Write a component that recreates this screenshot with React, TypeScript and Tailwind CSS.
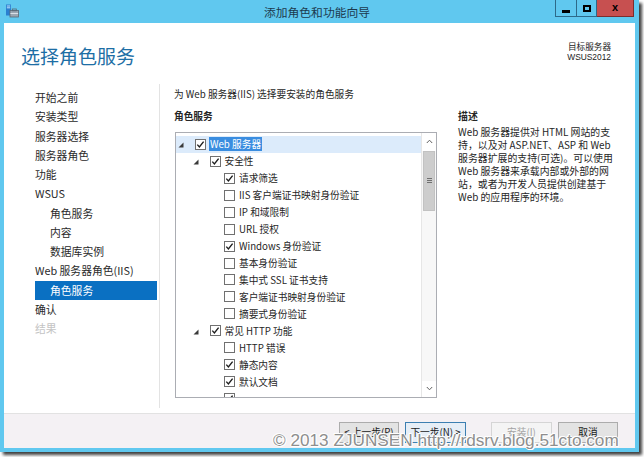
import React from "react";

type Row = { l: number; e?: boolean; c?: boolean; t: string; sel?: boolean };

const rows: Row[] = [
  { l: 0, e: true, c: true, t: "Web 服务器", sel: true },
  { l: 1, e: true, c: true, t: "安全性" },
  { l: 2, c: true, t: "请求筛选" },
  { l: 2, t: "IIS 客户端证书映射身份验证" },
  { l: 2, t: "IP 和域限制" },
  { l: 2, t: "URL 授权" },
  { l: 2, c: true, t: "Windows 身份验证" },
  { l: 2, t: "基本身份验证" },
  { l: 2, t: "集中式 SSL 证书支持" },
  { l: 2, t: "客户端证书映射身份验证" },
  { l: 2, t: "摘要式身份验证" },
  { l: 1, e: true, c: true, t: "常见 HTTP 功能" },
  { l: 2, t: "HTTP 错误" },
  { l: 2, c: true, t: "静态内容" },
  { l: 2, c: true, t: "默认文档" },
  { l: 2, c: true, t: "" },
];

const indent = ["pl-0", "pl-[14.5px]", "pl-[29px]"];

function Check({ checked }: { checked?: boolean }) {
  return (
    <span className="w-[11px] h-[11px] border border-[#707070] bg-white flex items-center justify-center shrink-0">
      {checked && (
        <svg width="9" height="9" viewBox="0 0 9 9">
          <path d="M1.3 4.6 L3.4 6.9 L7.6 1.6" stroke="#1e1e1e" strokeWidth="1.4" fill="none" />
        </svg>
      )}
    </span>
  );
}

function Arrow() {
  return (
    <svg width="6" height="6" viewBox="0 0 6 6" className="mt-[2px]">
      <polygon points="5.5,0.5 5.5,5.5 0.5,5.5" fill="#3a3a3a" />
    </svg>
  );
}

const nav: { t: string; sub?: boolean; sel?: boolean; dis?: boolean }[] = [
  { t: "开始之前" },
  { t: "安装类型" },
  { t: "服务器选择" },
  { t: "服务器角色" },
  { t: "功能" },
  { t: "WSUS" },
  { t: "角色服务", sub: true },
  { t: "内容", sub: true },
  { t: "数据库实例", sub: true },
  { t: "Web 服务器角色(IIS)" },
  { t: "角色服务", sub: true, sel: true },
  { t: "确认" },
  { t: "结果", dis: true },
];

const desc = [
  "Web 服务器提供对 HTML 网站的支",
  "持，以及对 ASP.NET、ASP 和 Web",
  "服务器扩展的支持(可选)。可以使用",
  "Web 服务器来承载内部或外部的网",
  "站，或者为开发人员提供创建基于",
  "Web 的应用程序的环境。",
];

export default function App() {
  return (
    <div className="w-[644px] h-[457px] bg-white relative overflow-hidden font-['Noto_Sans_CJK_SC',sans-serif]">
      <div className="w-[639px] h-[452px] bg-[#60c8ef] flex flex-col shadow-[3px_3px_3px_rgba(0,0,0,0.75)]">
        {/* title bar */}
        <div className="h-[23px] flex items-start relative">
          <div className="pl-[5px] pt-[4px] w-[100px]">
            <svg width="14" height="14" viewBox="0 0 14 14">
              <rect x="1" y="0.5" width="5" height="11" fill="#2a7fd0" />
              <rect x="1.8" y="1.5" width="3.4" height="1" fill="#bfe3ff" />
              <rect x="1.8" y="3.3" width="3.4" height="1" fill="#bfe3ff" />
              <rect x="5" y="6.5" width="8.5" height="6.5" fill="#9aa7b3" stroke="#5b6772" strokeWidth="0.8" />
              <rect x="7.3" y="5" width="4" height="1.8" fill="none" stroke="#5b6772" strokeWidth="0.8" />
              <rect x="5.4" y="9" width="7.7" height="0.8" fill="#e8eef3" />
            </svg>
          </div>
          <div className="flex-1 text-center text-[11.8px] leading-[16px] pt-[4px] text-[#1c3a4e]">添加角色和功能向导</div>
          <div className="flex h-[17px] mr-[5px] w-[100px] justify-end">
            <div className="w-[22px] h-[17px] border border-[#2d6a89] border-t-0 flex items-end justify-center pb-[3px]">
              <div className="w-[8px] h-[3px] bg-black" />
            </div>
            <div className="w-[20px] h-[17px] border border-[#2d6a89] border-t-0 border-l-0 flex items-center justify-center">
              <div className="w-[8px] h-[7px] border-2 border-black" />
            </div>
            <div className="w-[37px] h-[17px] bg-[#c75050] border border-[#7c2d2d] border-t-0 border-l-0 flex items-center justify-center text-[11px] font-bold leading-none text-black font-['Liberation_Sans',sans-serif] pb-[1px]">
              x
            </div>
          </div>
        </div>

        {/* client area */}
        <div className="mx-[4px] flex-1 flex flex-col">
          <div className="h-[390px] bg-white flex flex-col">
            {/* header */}
            <div className="h-[61px] flex justify-between pl-[17px] pr-[24px]">
              <div className="pt-[20px] text-[19px] leading-[26px] text-[#1d6ea5]">选择角色服务</div>
              <div className="pt-[18px] text-[8.6px] leading-[10.5px] text-right text-[#222]">
                <div>目标服务器</div>
                <div className="font-['Liberation_Sans',sans-serif] text-[8.4px]">WSUS2012</div>
              </div>
            </div>
            {/* body */}
            <div className="flex-1 flex pb-[5px]">
              <div className="w-[156px] border-r border-[#e3e3e3] pt-[4px] pl-[31px] pr-[2px] text-[10.8px] text-[#2a2a2a]">
                {nav.map((n, i) => (
                  <div
                    key={i}
                    className={
                      "h-[19.25px] leading-[19.25px] whitespace-nowrap " +
                      (n.sub ? "pl-[15px] " : "") +
                      (n.sel ? "bg-[#0a70c2] text-white " : "") +
                      (n.dis ? "text-[#c4c4c4]" : "")
                    }
                  >
                    {n.t}
                  </div>
                ))}
              </div>
              <div className="flex-1 pl-[14px] pt-[2px] text-[9.7px] text-[#262626]">
                <div className="leading-[16px]">为 Web 服务器(IIS) 选择要安装的角色服务</div>
                <div className="flex mt-[6px]">
                  <div className="flex flex-col">
                    <div className="leading-[16px] font-bold">角色服务</div>
                    <div className="ml-[1px] mt-[7.5px] w-[262px] h-[266px] border border-[#abadb3] flex overflow-hidden">
                      <div className="flex-1 pt-[3.5px] overflow-hidden">
                        {rows.map((r, i) => (
                          <div
                            key={i}
                            className={
                              "h-[16.95px] flex items-center whitespace-nowrap " +
                              indent[r.l] +
                              (r.sel ? " bg-[#dcebfb]" : "")
                            }
                          >
                            <div className="w-[19px] pl-[2px] flex items-center shrink-0">{r.e && <Arrow />}</div>
                            <Check checked={r.c} />
                            {r.t && (
                              <span
                                className={
                                  "ml-[3px] px-[1px] leading-[14px] " +
                                  (r.sel ? "bg-[#3a8de0] text-white" : "")
                                }
                              >
                                {r.t}
                              </span>
                            )}
                          </div>
                        ))}
                      </div>
                      <div className="w-[15px] border-l border-[#e6e6e6] flex flex-col bg-[#f7f7f7]">
                        <div className="h-[18px] bg-white flex items-center justify-center">
                          <svg width="7" height="5" viewBox="0 0 7 5">
                            <path d="M0.8 4 L3.5 1.2 L6.2 4" stroke="#606060" strokeWidth="1" fill="none" />
                          </svg>
                        </div>
                        <div className="h-[60px] mx-[1px] bg-[#cdcdcd] border border-[#c2c2c2] flex flex-col items-center justify-center gap-[1px]">
                          <div className="w-[5px] h-[1px] bg-[#707070]" />
                          <div className="w-[5px] h-[1px] bg-[#707070]" />
                          <div className="w-[5px] h-[1px] bg-[#707070]" />
                        </div>
                        <div className="flex-1" />
                        <div className="h-[16px] bg-white flex items-center justify-center">
                          <svg width="7" height="5" viewBox="0 0 7 5">
                            <path d="M0.8 1 L3.5 3.8 L6.2 1" stroke="#606060" strokeWidth="1" fill="none" />
                          </svg>
                        </div>
                      </div>
                    </div>
                  </div>
                  <div className="ml-[21px] flex flex-col text-[9.9px]">
                    <div className="leading-[16px] font-bold">描述</div>
                    <div className="mt-[2px] leading-[13px]">
                      {desc.map((d, i) => (
                        <div key={i} className="whitespace-nowrap">
                          {d}
                        </div>
                      ))}
                    </div>
                  </div>
                </div>
              </div>
            </div>
          </div>
          {/* footer */}
          <div className="flex-1 bg-[#f4f1f4] border-t border-[#e2e2e2] flex justify-end items-start pt-[8px] pr-[17px] text-[9.7px]">
            <div className="w-[60px] h-[21px] bg-[#e3e3e3] border border-[#acacac] flex items-center justify-center text-[#1a1a1a]">
              &lt; 上一步(P)
            </div>
            <div className="ml-[6px] w-[61px] h-[21px] bg-[#e6eef6] border border-[#3c7fb1] flex items-center justify-center text-[#1a1a1a]">
              下一步(N) &gt;
            </div>
            <div className="ml-[25px] w-[61px] h-[21px] bg-[#f4f4f4] border border-[#d5d5d5] flex items-center justify-center text-[#a3a3a3]">
              安装(I)
            </div>
            <div className="ml-[6px] w-[60px] h-[21px] bg-[#e3e3e3] border border-[#acacac] flex items-center justify-center text-[#1a1a1a]">
              取消
            </div>
          </div>
        </div>
        <div className="h-[4px]" />
      </div>
      {/* watermark */}
      <div className="absolute left-[273px] top-[432px] text-[17.2px] leading-[17px] whitespace-nowrap font-['Liberation_Sans',sans-serif] text-[#8e8e8e] [text-shadow:1px_0_0_#fff,-1px_0_0_#fff,0_1px_0_#fff,0_-1px_0_#fff,1px_1px_0_#fff,-1px_-1px_0_#fff]">
        © 2013 ZJUNSEN http://rdsrv.blog.51cto.com
      </div>
    </div>
  );
}
